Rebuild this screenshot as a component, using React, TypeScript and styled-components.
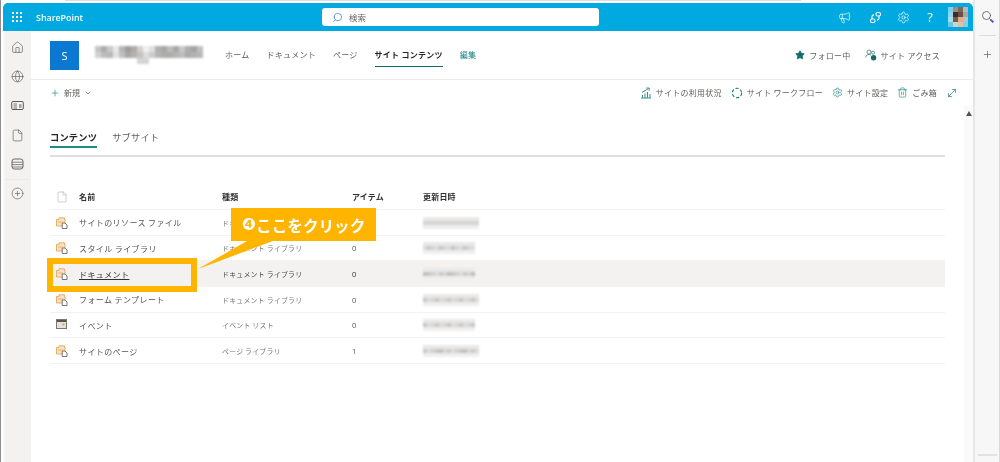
import React from "react";
import styled, { createGlobalStyle } from "styled-components";
import { Home, Globe, File, CirclePlus, Megaphone, Settings, Star, Search, Plus, ChevronDown, MoveDiagonal, Trash2 } from "lucide-react";

const FONT = `"Noto Sans CJK JP", "Noto Sans", sans-serif`;
const Global = createGlobalStyle`
  html, body { margin: 0; padding: 0; background: #fff; }
  body { font-family: ${FONT}; }
`;
const Page = styled.div`
  position: relative; width: 1000px; height: 462px; overflow: hidden; display: flex; background: #fff;
  border-left: 1px solid #8c8c8c; box-sizing: border-box; filter: blur(0.35px);
`;
const TopEdge = styled.div`
  position: absolute; left: 64px; top: 0; width: 736px; height: 1px; background: #dedede;
`;
const Main = styled.div`display: flex; flex-direction: column; width: 972px; padding: 3px 0 0 2px; box-sizing: border-box;`;
const TopBar = styled.header`
  height: 28px; background: #00a9e0; border-radius: 5px 5px 0 0; display: flex; align-items: center; color: #fff; flex: none;
`;
const Waffle = styled.div`
  display: grid; grid-template-columns: repeat(3, 2px); gap: 2px; margin-left: 9px; span { width: 2px; height: 2px; background: #fff; }
`;
const Brand = styled.div`font: 600 8.9px "Open Sans", sans-serif; margin-left: 14px; width: 286px;`;
const SearchBox = styled.div`
  width: 277px; height: 18px; background: #fff; border-radius: 3px; display: flex; align-items: center; color: #666; font-size: 8.5px; padding-left: 10px; box-sizing: border-box; gap: 6px;
  svg { color: #2b6cb0; transform: scaleX(-1); }
`;
const TopIcons = styled.div`display: flex; align-items: center; margin-left: auto; gap: 15px; padding-right: 5px;`;
const TopSlot = styled.span<{ $mr?: number }>`display: flex; margin-right: ${p => p.$mr ?? 0}px;`;
const QMark = styled.span`font: 400 13px "Open Sans", sans-serif; width: 11px; text-align: center; margin-right: -2.5px;`;
const Body = styled.div`display: flex; flex: 1; min-height: 0;`;
const Side = styled.nav`
  width: 28px; background: #f3f2f1; box-shadow: inset 2px 0 0 #f8f8f8; display: flex; flex-direction: column; align-items: center; padding-top: 10px; color: #5a5856; box-sizing: border-box; flex: none;
`;
const SideIcon = styled.div`height: 29.2px; display: flex; align-items: flex-start; justify-content: center;`;
const SideSep = styled.div`width: 24px; height: 1px; background: #ebe9e7; margin: -8px 0 7px;`;
const Content = styled.main`flex: 1; display: flex; flex-direction: column; min-width: 0;`;
const SiteHeader = styled.div`
  height: 49px; border-bottom: 1px solid #edebe9; display: flex; align-items: center; padding: 0 33px 0 19px; box-sizing: border-box; flex: none; font-size: 8px; color: #605e5c;
`;
const Logo = styled.div`
  width: 29px; height: 29px; background: #0b78d1; color: #fff; display: flex; align-items: center; justify-content: center; font: 400 11px "Open Sans", sans-serif; margin-right: 16px; flex: none;
`;
const Grid = styled.div<{ $cols: number; $cell: number; $blur?: number }>`
  display: grid; grid-template-columns: repeat(${p => p.$cols}, ${p => p.$cell}px); grid-auto-rows: ${p => p.$cell}px; flex: none; filter: blur(${p => p.$blur ?? 0.6}px);
`;
const Cell = styled.i<{ $c: string }>`background: ${p => p.$c}; display: block;`;
const NavList = styled.div`display: flex; align-items: center; margin-left: 22px; gap: 17px;`;
const NavLink = styled.span<{ $active?: boolean; $teal?: boolean }>`
  line-height: 16px; letter-spacing: 0.25px; position: relative; white-space: nowrap;
  color: ${p => (p.$active ? "#252423" : p.$teal ? "#0f7b7b" : "#605e5c")}; font-weight: ${p => (p.$active ? 700 : 400)};
  ${p => p.$active && `&::after { content: ""; position: absolute; left: 0; right: 0; bottom: -4px; height: 1.5px; background: #0f6c6c; }`}
`;
const Actions = styled.div`display: flex; align-items: center; margin-left: auto; gap: 14px;`;
const Action = styled.span`
  display: flex; align-items: center; gap: 4px; white-space: nowrap; letter-spacing: 0.25px; font-size: 8px; color: #605e5c; svg { color: #0f7b7b; flex: none; }
`;
const CommandBar = styled.div`
  height: 25px; display: flex; align-items: center; padding: 0 15px 0 19px; box-sizing: border-box; flex: none; font-size: 8px; color: #605e5c;
`;
const NewBtn = styled.span`display: flex; align-items: center; gap: 4px; svg:first-child { color: #0f7b7b; }`;
const Commands = styled.div`display: flex; align-items: center; margin-left: auto; gap: 9px;`;
const Lower = styled.div`flex: 1; display: flex; min-height: 0;`;
const Scroll = styled.div`flex: 1; padding: 24px 19px 0 19px; box-sizing: border-box; min-width: 0;`;
const Bar = styled.div`width: 9px; background: #fafafa; flex: none; display: flex; justify-content: center; padding-top: 6px; box-sizing: border-box;`;
const Arrow = styled.div`width: 0; height: 0; border: 3.5px solid transparent; border-bottom: 5px solid #555; border-top: 0;`;
const Tabs = styled.div`
  display: flex; gap: 15px; height: 26px; border-bottom: 2px solid #e1dfdd; font-size: 9.2px; letter-spacing: 0.25px;
`;
const Tab = styled.span<{ $on?: boolean }>`
  position: relative; height: 19px; line-height: 16px; color: ${p => (p.$on ? "#252423" : "#605e5c")}; font-weight: ${p => (p.$on ? 700 : 400)};
  ${p => p.$on && `&::after { content: ""; position: absolute; left: 0; right: 0; bottom: 0; height: 2px; background: #1f8a86; }`}
`;
const Table = styled.div`margin-top: 27px;`;
const Row = styled.div<{ $head?: boolean; $hover?: boolean }>`
  display: grid; grid-template-columns: 29px 143px 130px 71px 1fr; align-items: center; box-sizing: border-box;
  height: ${p => (p.$head ? "26px" : "25.67px")}; border-bottom: 1px solid #f3f2f1; padding-top: ${p => (p.$head ? 0 : 1)}px;
  background: ${p => (p.$hover ? "#f3f2f1" : "transparent")}; font-size: 8px;
  color: ${p => (p.$head || p.$hover ? "#323130" : "#555352")}; font-weight: ${p => (p.$head ? 700 : 400)}; letter-spacing: ${p => (p.$head ? 0.2 : 0.4)}px;
`;
const IconCell = styled.span`display: flex; padding-left: 6px; color: #a19f9d;`;
const Name = styled.span<{ $u?: boolean }>`white-space: nowrap; text-decoration: ${p => (p.$u ? "underline" : "none")};`;
const Type = styled.span<{ $hover?: boolean }>`font-size: 6.9px; letter-spacing: 0.25px; color: ${p => (p.$hover ? "#484644" : "#797775")}; white-space: nowrap;`;
const Count = styled.span`font-size: 7.6px; font-family: "Open Sans", sans-serif;`;
const Rail = styled.aside`
  flex: 1; background: #f7f7f7; border-left: 2px solid #e6e6e6; border-right: 1px solid #d9d9d9; display: flex; flex-direction: column; align-items: center; padding-top: 10px; box-sizing: border-box; color: #555;
`;
const RailSep = styled.div`width: 17px; height: 1px; background: #dcdcdc; margin: 13px 0 13px;`;
const RailBottom = styled.div`width: 19px; height: 2px; background: #e2e2e2; margin-top: auto; margin-bottom: 6px;`;
const RailSearch = styled.span`position: relative; display: flex; &::after { content: ""; position: absolute; right: -1px; bottom: 0; width: 4px; height: 2px; background: #7a3fc0; transform: rotate(45deg); }`;
const Frame = styled.div`
  position: absolute; left: 46px; top: 258px; width: 150px; height: 34px; border: 6px solid #ffb400; box-sizing: border-box; pointer-events: none;
`;
const Callout = styled.div`
  position: absolute; left: 230px; top: 208px; width: 145px; height: 33px; background: #ffb400; color: #fff; display: flex; align-items: center; justify-content: center; font-weight: 700; font-size: 15.6px; white-space: nowrap;
`;
const Num = styled.span`font-size: 17px; line-height: 17px; font-family: "DejaVu Sans", sans-serif;`;
const Tail = styled.svg`position: absolute; left: 196px; top: 240px;`;

const ListIcon = () => (
  <svg width="12" height="12" viewBox="0 0 12 12" fill="none">
    <path d="M.5 2.5h2.5V.8h5.5v1.7h.5V9h-8.5z" fill="#fbe2c2" stroke="#e5a55c" strokeWidth=".9" />
    <path d="M2 5h5" stroke="#e5a55c" strokeWidth=".8" />
    <path d="M6.2 6h2.8l2 2v3.5H6.2z" fill="#fff" stroke="#666" strokeWidth=".9" />
  </svg>
);
const EventIcon = () => (
  <svg width="12" height="12" viewBox="0 0 12 12" fill="none">
    <rect x=".5" y=".5" width="10" height="9" fill="#e3e1de" stroke="#77756f" />
    <rect x="1" y="1" width="9" height="2" fill="#55534f" />
    <rect x="6.5" y="4.5" width="2" height="2" fill="#e8a33d" />
  </svg>
);
const FlowIcon = () => (
  <svg width="12" height="12" viewBox="0 0 12 12" fill="none" stroke="#0f7b7b" strokeWidth="1.1">
    <circle cx="6" cy="6" r="4.7" strokeDasharray="3.2 1.8" />
  </svg>
);
const UsageIcon = () => (
  <svg width="12" height="12" viewBox="0 0 12 12" fill="none" stroke="#3f8f8f" strokeWidth="1">
    <path d="M1 11h10M2.5 11V8M5 11V6.5M7.5 11V5M10 11V7" />
    <path d="M2 5.5 8.5 1.5M6.3 1h2.9v2.7" />
  </svg>
);
const AccessIcon = () => (
  <svg width="12" height="12" viewBox="0 0 12 12" fill="none" stroke="#4f8a8a" strokeWidth=".9">
    <circle cx="4" cy="3" r="2" />
    <circle cx="8" cy="3.6" r="1.5" />
    <path d="M.8 8.5c0-2 1.3-3 3.2-3 1 0 1.6.3 2.1.7" />
    <circle cx="8.6" cy="8.8" r="2.7" fill="#0f6c6c" stroke="none" />
  </svg>
);
const TeamsLink = () => (
  <svg width="13" height="13" viewBox="0 0 13 13" fill="none" stroke="#fff" strokeWidth="1.1">
    <rect x="7" y="1.5" width="4.5" height="3.5" rx="1.6" />
    <rect x="1.5" y="8" width="4.5" height="3.5" rx="1.6" />
    <path d="M3 8V5.5c0-1.2 1-1.6 2-1.6M10 5v2.5c0 1.2-1 1.6-2 1.6" />
  </svg>
);
const CardIcon = () => (
  <svg width="13" height="12" viewBox="0 0 13 12" fill="none" stroke="currentColor" strokeWidth="1">
    <path d="M2 2.5h9a1.3 1.3 0 0 1 1.3 1.3v5.4A1.3 1.3 0 0 1 11 10.5H2A1.3 1.3 0 0 1 .7 9.2V3.8A1.3 1.3 0 0 1 2 2.5z" />
    <path d="M2.5 5h3.5M2.5 7h3.5M2.5 9h3.5" strokeWidth=".8" />
    <path d="M8 5.2h2.5v3.6H8z" fill="currentColor" stroke="none" opacity=".55" />
  </svg>
);
const StackIcon = () => (
  <svg width="13" height="12" viewBox="0 0 13 12" fill="none" stroke="currentColor" strokeWidth=".9">
    <rect x="1" y="1" width="11" height="10" rx="2.4" />
    <path d="M1 4.2h11M1 6.6h11M1 9h11" strokeWidth=".7" />
  </svg>
);

const shades = ["#d2d1d0", "#c8c6c5", "#bfbdbb", "#d6d5d4", "#cccac9", "#dcdbda"];
const Mosaic = ({ cols, seed }: { cols: number; seed: number }) => (
  <Grid $cols={cols} $cell={4} $blur={0.9}>
    {Array.from({ length: cols * 3 }, (_, i) => {
      const col = i % cols;
      const band = Math.floor(i / cols);
      const c = shades[(col * col * 3 + col * seed + seed) % shades.length];
      return <Cell key={i} $c={band === 1 ? c : band === 0 ? "#e9e8e8" : "#efeeee"} />;
    })}
  </Grid>
);
const avatar = ["#7fd0ee", "#9a8d84", "#77685d", "#b9b6b3", "#8fd6ee", "#3d2d24", "#6b5040", "#a9a5a0", "#a8dcef", "#7a5a45", "#d9b08f", "#b5c3c8", "#6cc8ea", "#c8d4d8", "#e2c0a2", "#7fd0ee"];
const siteRow1 = ["#c4c4c4","#adadad","#c8c8c8","#e8e8e8","#b6b6b6","#a09c99","#aeaba9","#d0d0d0","#f0f0f0","#e0e0e0","#b4b0ad","#aaa6a3","#bdbdbd","#a8a8a8","#c8c8c8","#b0adaa","#a6a29f","#c0c0c0"];
const siteRow2 = ["#d2d2d2","#bcbcbc","#b8b8b8","#e2e2e2","#c0c0c0","#aaa6a3","#b4b1af","#c2c2c2","#dcdcdc","#cccccc","#b8b4b1","#b0aca8","#acacac","#b4b4b4","#bcbcbc","#aeaba8","#b4b1af","#b8b8b8"];
const siteRow3 = Array.from({ length: 18 }, (_, i) => (i === 7 || i === 8 ? "#d4d4d4" : "#fff"));

type R = { name: string; type: string; count: string; event?: boolean; hover?: boolean; w: number; seed: number };
const rows: R[] = [
  { name: "サイトのリソース ファイル", type: "ドキュメント ライブラリ", count: "0", w: 14, seed: 3 },
  { name: "スタイル ライブラリ", type: "ドキュメント ライブラリ", count: "0", w: 13, seed: 5 },
  { name: "ドキュメント", type: "ドキュメント ライブラリ", count: "0", hover: true, w: 13, seed: 2 },
  { name: "フォーム テンプレート", type: "ドキュメント ライブラリ", count: "0", w: 14, seed: 7 },
  { name: "イベント", type: "イベント リスト", count: "0", event: true, w: 13, seed: 1 },
  { name: "サイトのページ", type: "ページ ライブラリ", count: "1", w: 14, seed: 4 },
];

export default function App() {
  return (
    <Page>
      <Global />
      <TopEdge />
      <Main>
        <TopBar>
          <Waffle>{Array.from({ length: 9 }, (_, i) => <span key={i} />)}</Waffle>
          <Brand>SharePoint</Brand>
          <SearchBox><Search size={11} strokeWidth={1.4} /><span>検索</span></SearchBox>
          <TopIcons>
            <TopSlot $mr={2.5}><Megaphone size={13} strokeWidth={1.3} /></TopSlot>
            <TeamsLink />
            <Settings size={13} strokeWidth={1.3} />
            <QMark>?</QMark>
            <Grid $cols={4} $cell={5}>{avatar.map((c, i) => <Cell key={i} $c={c} />)}</Grid>
          </TopIcons>
        </TopBar>
        <Body>
          <Side>
            <SideIcon><Home size={13} strokeWidth={1.2} /></SideIcon>
            <SideIcon><Globe size={13} strokeWidth={1.2} /></SideIcon>
            <SideIcon><CardIcon /></SideIcon>
            <SideIcon><File size={13} strokeWidth={1.2} /></SideIcon>
            <SideIcon><StackIcon /></SideIcon>
            <SideSep />
            <SideIcon><CirclePlus size={13} strokeWidth={1.2} /></SideIcon>
          </Side>
          <Content>
            <SiteHeader>
              <Logo>S</Logo>
              <Grid $cols={18} $cell={6} $blur={1}>{[...siteRow1, ...siteRow2, ...siteRow3].map((c, i) => <Cell key={i} $c={c} />)}</Grid>
              <NavList>
                <NavLink>ホーム</NavLink>
                <NavLink>ドキュメント</NavLink>
                <NavLink>ページ</NavLink>
                <NavLink $active>サイト コンテンツ</NavLink>
                <NavLink $teal>編集</NavLink>
              </NavList>
              <Actions>
                <Action><Star size={10} fill="#0f6c6c" stroke="#0f6c6c" />フォロー中</Action>
                <Action><AccessIcon />サイト アクセス</Action>
              </Actions>
            </SiteHeader>
            <CommandBar>
              <NewBtn><Plus size={10} strokeWidth={1.4} />新規<ChevronDown size={8} /></NewBtn>
              <Commands>
                <Action><UsageIcon />サイトの利用状況</Action>
                <Action><FlowIcon />サイト ワークフロー</Action>
                <Action><Settings size={11} strokeWidth={1.3} />サイト設定</Action>
                <Action><Trash2 size={11} strokeWidth={1.3} />ごみ箱</Action>
                <Action><MoveDiagonal size={12} strokeWidth={1.3} /></Action>
              </Commands>
            </CommandBar>
            <Lower>
              <Scroll>
                <Tabs>
                  <Tab $on>コンテンツ</Tab>
                  <Tab>サブサイト</Tab>
                </Tabs>
                <Table>
                  <Row $head>
                    <IconCell><File size={12} strokeWidth={1} /></IconCell>
                    <span>名前</span><span>種類</span><span>アイテム</span><span>更新日時</span>
                  </Row>
                  {rows.map(r => (
                    <Row key={r.name} $hover={r.hover}>
                      <IconCell>{r.event ? <EventIcon /> : <ListIcon />}</IconCell>
                      <Name $u={r.hover}>{r.name}</Name>
                      <Type $hover={r.hover}>{r.type}</Type>
                      <Count>{r.count}</Count>
                      <Mosaic cols={r.w} seed={r.seed} />
                    </Row>
                  ))}
                </Table>
              </Scroll>
              <Bar><Arrow /></Bar>
            </Lower>
          </Content>
        </Body>
      </Main>
      <Rail>
        <RailSearch><Search size={12} strokeWidth={1.6} /></RailSearch>
        <RailSep />
        <Plus size={11} strokeWidth={1.4} />
        <RailBottom />
      </Rail>
      <Tail width="78" height="30" viewBox="0 0 78 30"><polygon points="50,1 76,1 1,29" fill="#ffb400" /></Tail>
      <Callout><Num>❹</Num>ここをクリック</Callout>
      <Frame />
    </Page>
  );
}
